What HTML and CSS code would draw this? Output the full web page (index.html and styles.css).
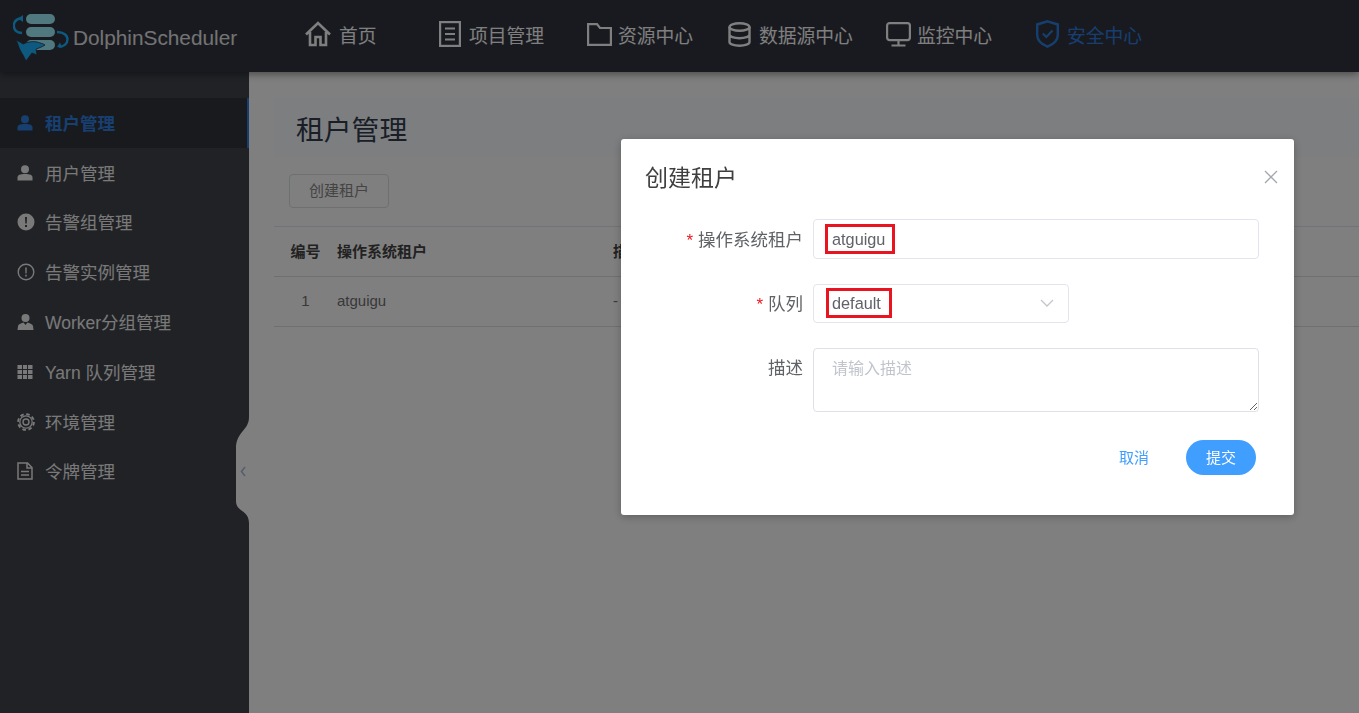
FILE: index.html
```html
<!DOCTYPE html>
<html lang="zh-CN">
<head>
<meta charset="utf-8">
<title>DolphinScheduler</title>
<link rel="stylesheet" href="styles.css">
</head>
<body>
<div class="app">
  <header class="topbar">
    <div class="brand">
      <svg class="logo" width="56" height="48" viewBox="0 0 56 48">
        <rect x="13" y="0" width="29" height="10" rx="5" fill="#9ef0ff"/>
        <rect x="13" y="13" width="29" height="10" rx="5" fill="#9ef0ff"/>
        <rect x="13" y="26" width="29" height="10" rx="5" fill="#9ef0ff"/>
        <path d="M9 4C3 5 .8 8.500 .8 11.500C.8 15.500 3.500 18.500 9 19" fill="none" stroke="#1ab2ff" stroke-width="2.400"/>
        <path d="M5 4.500L10 1V8Z" fill="#1ab2ff"/>
        <path d="M44 18C51 18 54.500 21.500 54.500 25.500C54.500 29.500 51 32.500 46 32.800" fill="none" stroke="#1ab2ff" stroke-width="2.400"/>
        <path d="M49 33.500L44 33L47 28.500Z" fill="#1ab2ff"/>
        <path d="M3 26L7 28L10 30C14 28 20 27 24 28C27 29 30 29.500 32 31C29 33 26 34 23 35L24 41L19 39L13 47L10 41C8 38 6 34 5.500 32C5 30 4 28 3 26Z" fill="#1ab2ff" stroke="#32353f" stroke-width=".8"/>
      </svg>
      <span class="brand-name">DolphinScheduler</span>
    </div>
    <nav class="nav">
      <a class="nav-item">
        <svg width="26" height="26" viewBox="0 0 26 26" fill="none" stroke="currentColor" stroke-width="2.600"><path d="M1 13.500L13 2L25 13.500M5 11V24H10.500V16H15.500V24H21V11"/></svg>
        <span>首页</span>
      </a>
      <a class="nav-item">
        <svg class="ic-doc" width="22" height="26" viewBox="0 0 22 26" fill="none" stroke="currentColor" stroke-width="2.200"><rect x="1.100" y="1.100" width="19.800" height="23.800"/><path d="M6 7.500H16M6 13H16M6 18.500H16" stroke-width="1.800"/></svg>
        <span>项目管理</span>
      </a>
      <a class="nav-item">
        <svg class="ic-folder" width="25" height="23" viewBox="0 0 25 23" fill="none" stroke="currentColor" stroke-width="2.200"><path d="M1.100 1.100H10L13 5H23.900V21.900H1.100Z"/></svg>
        <span>资源中心</span>
      </a>
      <a class="nav-item">
        <svg class="ic-db" width="23" height="25" viewBox="0 0 23 25" fill="none" stroke="currentColor" stroke-width="2.400"><ellipse cx="11.500" cy="5" rx="10" ry="3.800"/><path d="M1.500 5V20C1.500 22.200 6 23.800 11.500 23.800S21.500 22.200 21.500 20V5M1.500 12.500C1.500 14.700 6 16.300 11.500 16.300S21.500 14.700 21.500 12.500"/></svg>
        <span>数据源中心</span>
      </a>
      <a class="nav-item">
        <svg class="ic-mon" width="25" height="25" viewBox="0 0 25 25" fill="none" stroke="currentColor" stroke-width="2.200"><rect x="1.100" y="1.100" width="22.800" height="17" rx="2.500"/><path d="M12.500 18V23.500M5.500 23.500H19.500"/></svg>
        <span>监控中心</span>
      </a>
      <a class="nav-item is-active">
        <svg width="23" height="28" viewBox="0 0 23 28" fill="none" stroke="currentColor" stroke-width="2.400"><path d="M11.500 1.300L21.800 4.500V15C21.800 20.500 17 24.500 11.500 26.700C6 24.500 1.200 20.500 1.200 15V4.500Z"/><path d="M6.800 13.500L10.300 17L16.500 10.500" stroke-width="2"/></svg>
        <span>安全中心</span>
      </a>
    </nav>
  </header>

  <div class="body">
    <aside class="sidebar">
      <ul class="menu">
        <li class="menu-item is-active">
          <svg width="16" height="16" viewBox="0 0 16 16" fill="currentColor"><circle cx="8" cy="4.300" r="4"/><path d="M.5 15.500V12.500C.5 10 3 9 8 9S15.500 10 15.500 12.500V15.500Z"/></svg>
          <span>租户管理</span>
        </li>
        <li class="menu-item">
          <svg width="16" height="16" viewBox="0 0 16 16" fill="currentColor"><circle cx="8" cy="4.300" r="4"/><path d="M.5 15.500V12.500C.5 10 3 9 8 9S15.500 10 15.500 12.500V15.500Z"/></svg>
          <span>用户管理</span>
        </li>
        <li class="menu-item">
          <svg width="18" height="18" viewBox="0 0 18 18"><circle cx="9" cy="9" r="8.500" fill="currentColor"/><path d="M8 4H10L9.700 10.500H8.300ZM8 12H10V14H8Z" fill="#404449"/></svg>
          <span>告警组管理</span>
        </li>
        <li class="menu-item">
          <svg width="18" height="18" viewBox="0 0 18 18"><circle cx="9" cy="9" r="7.800" fill="none" stroke="currentColor" stroke-width="1.400"/><path d="M8.200 4.500H9.800L9.600 10.500H8.400ZM8.200 11.800H9.800V13.400H8.200Z" fill="currentColor"/></svg>
          <span>告警实例管理</span>
        </li>
        <li class="menu-item">
          <svg width="17" height="17" viewBox="0 0 17 17" fill="currentColor"><circle cx="8.500" cy="4.500" r="4"/><path d="M.5 16.500L1 12.500C1.500 10.500 3.500 10 6.500 9L8.500 11.500L10.500 9C13.500 10 15.500 10.500 16 12.500L16.500 16.500Z"/></svg>
          <span>Worker分组管理</span>
        </li>
        <li class="menu-item">
          <svg width="16" height="16" viewBox="0 0 16 16" fill="currentColor"><path d="M.5 1H5V5H.5ZM6 1H10V5H6ZM11 1H15.500V5H11ZM.5 6H5V10H.5ZM6 6H10V10H6ZM11 6H15.500V10H11ZM.5 11H5V15H.5ZM6 11H10V15H6ZM11 11H15.500V15H11Z"/></svg>
          <span>Yarn 队列管理</span>
        </li>
        <li class="menu-item">
          <svg width="18" height="18" viewBox="0 0 18 18" fill="none" stroke="currentColor"><circle cx="9" cy="9" r="7.900" stroke-width="1.900" stroke-dasharray="3.600 2.600"/><circle cx="9" cy="9" r="6.200" stroke-width="1.300"/><circle cx="9" cy="9" r="3" stroke-width="1.400"/></svg>
          <span>环境管理</span>
        </li>
        <li class="menu-item">
          <svg width="16" height="18" viewBox="0 0 16 18" fill="none" stroke="currentColor" stroke-width="1.500"><path d="M1 1H10.500L15 5.500V17H1Z"/><path d="M10 1V6H15M4 9.500H12M4 13H12"/></svg>
          <span>令牌管理</span>
        </li>
      </ul>
      <svg class="collapse" width="14" height="106" viewBox="0 0 14 106">
        <path d="M14 0C14 14 1 14 1 32V84C1 95 14 93 14 106Z" fill="#fff"/>
        <path d="M10 50L6.500 54.500L10 59" fill="none" stroke="#a8bcdc" stroke-width="1.600"/>
      </svg>
    </aside>

    <main class="main">
      <div class="page-title">租户管理</div>
      <div class="toolbar"><button class="btn-outline" type="button">创建租户</button></div>
      <table class="table">
        <colgroup><col class="col-id"><col class="col-name"><col></colgroup>
        <thead><tr><th class="center">编号</th><th>操作系统租户</th><th>描述</th></tr></thead>
        <tbody><tr><td class="center">1</td><td>atguigu</td><td>-</td></tr></tbody>
      </table>
    </main>
  </div>
</div>

<div class="overlay">
  <section class="modal">
    <div class="modal-head">
      <h2 class="modal-title">创建租户</h2>
      <svg class="close" width="14" height="14" viewBox="0 0 14 14" fill="none" stroke="#a4a7ad" stroke-width="1.300"><path d="M1 1L13 13M13 1L1 13"/></svg>
    </div>
    <form class="form">
      <label class="label"><i>*</i> 操作系统租户</label>
      <div class="field"><span class="mark mark-a">atguigu</span></div>
      <label class="label"><i>*</i> 队列</label>
      <div class="field field-select">
        <span class="mark mark-b">default</span>
        <svg width="14" height="8" viewBox="0 0 14 8" fill="none" stroke="#c3c5cc" stroke-width="1.300"><path d="M1 1L7 7L13 1"/></svg>
      </div>
      <label class="label label-top">描述</label>
      <textarea class="textarea" placeholder="请输入描述"></textarea>
    </form>
    <div class="modal-foot">
      <button class="btn-text" type="button">取消</button>
      <button class="btn-primary" type="button">提交</button>
    </div>
  </section>
</div>
</body>
</html>
```
FILE: styles.css
```css
* { box-sizing: border-box; }
html, body { margin: 0; height: 100%; overflow: hidden; }
body {
  font-family: "Liberation Sans", "Noto Sans CJK SC", sans-serif;
  background: #fff;
  color: #515a6e;
}
.app { display: flex; flex-direction: column; height: 713px; }

/* top bar */
.topbar {
  height: 72px;
  flex: none;
  display: flex;
  align-items: center;
  background: #32353f;
  color: #fff;
  box-shadow: 0 2px 8px rgba(0, 0, 0, .45);
  position: relative;
  z-index: 2;
}
.brand { width: 305px; flex: none; display: flex; align-items: center; padding-left: 13px; }
.logo { display: block; margin-top: 4px; }
.brand-name { margin-left: 4px; font-size: 20.800px; color: #e6e6e6; margin-top: 4px; }
.nav { display: grid; grid-template-columns: 134px 148px 141px 158px 150px auto; margin-top: -4px; }
.nav-item { display: flex; align-items: center; gap: 8px; font-size: 18.800px; color: #fff; height: 30px; }
.nav-item svg { flex: none; }
.nav-item.is-active { color: #2d7fe0; gap: 8px; }
.ic-folder + span { margin-left: -2px; }
.ic-mon + span { margin-left: -2px; }

/* body */
.body { flex: 1; display: flex; min-height: 0; }
.sidebar { width: 249px; flex: none; background: #41454c; position: relative; padding-top: 26px; }
.menu { list-style: none; margin: 0; padding: 0; }
.menu-item {
  height: 49.800px;
  display: flex;
  align-items: center;
  font-size: 17.500px;
  color: #f2f2f2;
  position: relative;
}
.menu-item svg { position: absolute; left: 17px; top: 50%; transform: translateY(-50%); }
.menu-item span { margin: -1px 0 0 45px; }
.menu-item.is-active { background: #31343c; color: #2f80e0; font-weight: 700; border-right: 2px solid #2d7fe0; }
.collapse { position: absolute; right: 0; top: 345px; }

/* main */
.main { flex: 1; min-width: 0; padding: 26px 0 0 25px; }
.page-title {
  height: 59px;
  padding: 13px 0 0 22px;
  font-size: 27.800px;
  line-height: 40px;
  background: #fbfdff;
  color: #333c4f;
}
.toolbar { padding: 17px 0 18px 15px; height: 69px; }
.btn-outline {
  width: 100px;
  height: 34px;
  padding: 0 0 3px;
  background: transparent;
  border: 1px solid #dcdee2;
  border-radius: 4px;
  font: inherit;
  font-size: 15px;
  color: #888;
}
.table { width: 100%; border-collapse: collapse; table-layout: fixed; font-size: 15px; color: #707070; }
.col-id { width: 63px; }
.col-name { width: 276px; }
.table th, .table td { height: 50px; text-align: left; padding: 0 0 3px; border-bottom: 1px solid #dfdfe6; }
.table thead tr { border-top: 1px solid #e4e6f0; }
.table th { font-weight: 700; color: #444; }
.table .center { text-align: center; }

/* dialog */
.overlay {
  position: fixed;
  inset: 0;
  z-index: 10;
  background: rgba(0, 0, 0, .5);
  padding: 139px 0 0 621px;
}
.modal {
  width: 673px;
  height: 376px;
  background: #fff;
  border-radius: 3px;
  box-shadow: 0 2px 8px rgba(0, 0, 0, .25);
  display: flex;
  flex-direction: column;
  padding: 0 35px 0 24px;
}
.modal-head { height: 80px; flex: none; display: flex; align-items: flex-start; justify-content: space-between; position: relative; }
.modal-title { margin: 22px 0 0; font-size: 23px; line-height: 34px; font-weight: 400; color: #3f3f3f; }
.close { position: absolute; right: -19px; top: 31px; }
.form { display: grid; grid-template-columns: 158px 446px; column-gap: 10px; row-gap: 25px; align-items: center; }
.label { font-size: 17.500px; color: #606266; text-align: right; margin-top: -1px; }
.label i { font-style: normal; color: #f0141e; font-size: 17px; }
.label-top { align-self: start; margin-top: 6px; }
.field {
  height: 39.500px;
  border: 1px solid #e4e4ef;
  border-radius: 4px;
  padding-left: 11px;
  display: flex;
  align-items: center;
}
.field-select { width: 256px; justify-content: space-between; padding-right: 14px; }
.mark {
  display: block;
  border: 3px solid #e8141f;
  height: 30px;
  line-height: 24px;
  font-size: 16.300px;
  color: #606266;
}
.mark-a { width: 70px; padding-left: 4px; }
.mark-b { width: 66px; padding-left: 3px; margin-left: 1px; }
.textarea {
  display: block;
  width: 446px;
  height: 64px;
  border: 1px solid #e0e1e8;
  border-radius: 4px;
  padding: 6px 18px;
  font: inherit;
  font-size: 16px;
  outline: none;
  resize: vertical;
}
.textarea::placeholder { color: #c0c4cc; }
.modal-foot { display: flex; justify-content: flex-end; align-items: center; margin-top: 28px; padding-right: 3px; }
.btn-text { border: 0; background: none; padding: 0 0 3px; font: inherit; font-size: 15px; color: #409eff; margin-right: 37px; }
.btn-primary { width: 70px; height: 35px; padding: 0 0 3px; border: 0; border-radius: 18px; background: #409eff; color: #fff; font: inherit; font-size: 15px; }
```
